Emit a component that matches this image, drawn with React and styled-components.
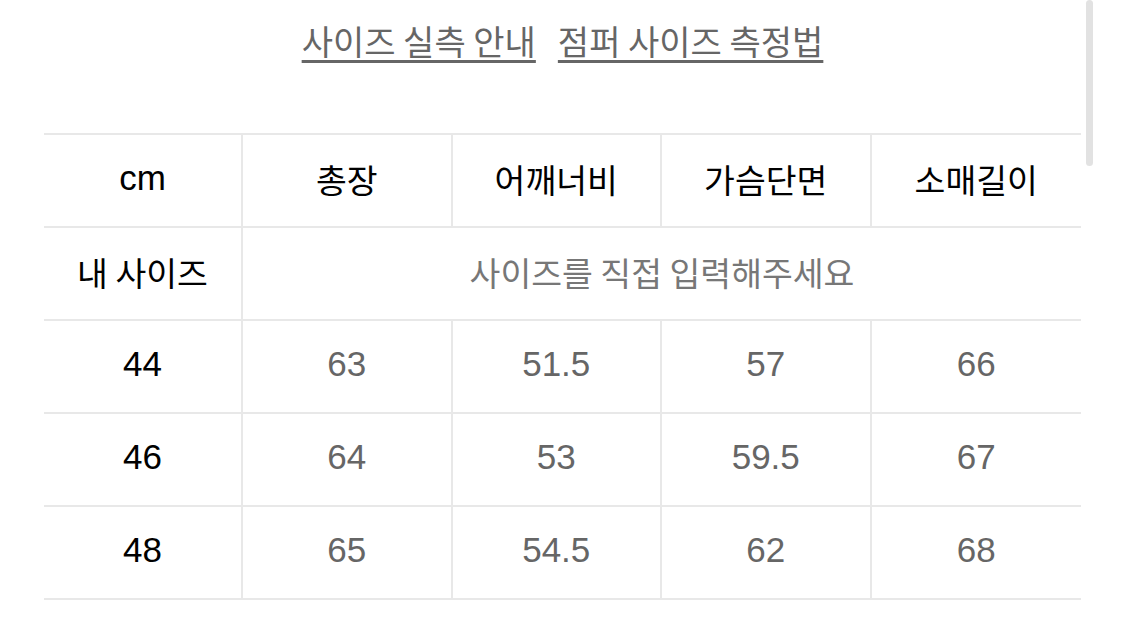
import styled, { createGlobalStyle } from "styled-components";

const GlobalStyle = createGlobalStyle`
  body {
    margin: 0;
    background: #ffffff;
    font-family: "Liberation Sans", "Noto Sans CJK KR", sans-serif;
  }
`;

const headers = ["총장", "어깨너비", "가슴단면", "소매길이"];

const sizes = [
  { size: "44", values: ["63", "51.5", "57", "66"] },
  { size: "46", values: ["64", "53", "59.5", "67"] },
  { size: "48", values: ["65", "54.5", "62", "68"] },
];

export default function App() {
  return (
    <Page>
      <GlobalStyle />
      <LinkBar>
        <GuideLink href="#">사이즈 실측 안내</GuideLink>
        <GuideLink href="#">점퍼 사이즈 측정법</GuideLink>
      </LinkBar>

      <SizeTable>
        <Cell $latin>cm</Cell>
        {headers.map((label, i) => (
          <Cell key={label} $last={i === headers.length - 1}>
            {label}
          </Cell>
        ))}

        <Cell>내 사이즈</Cell>
        <InputCell>사이즈를 직접 입력해주세요</InputCell>

        {sizes.map((row) => (
          <Row key={row.size}>
            <Cell $latin>{row.size}</Cell>
            {row.values.map((value, i) => (
              <Cell key={i} $latin $muted $last={i === row.values.length - 1}>
                {value}
              </Cell>
            ))}
          </Row>
        ))}
      </SizeTable>

      <Scrollbar />
    </Page>
  );
}

const Page = styled.div`
  position: relative;
  width: 1125px;
  height: 622px;
  padding: 0 44px;
  box-sizing: border-box;
  overflow: hidden;
`;

const LinkBar = styled.div`
  display: flex;
  justify-content: center;
  gap: 22px;
  width: 1037px;
  height: 133px;
  padding-top: 19px;
  box-sizing: border-box;
`;

const GuideLink = styled.a`
  font-family: "Noto Sans CJK KR", sans-serif;
  font-size: 34px;
  line-height: 44px;
  color: #666666;
  text-decoration: underline;
  text-decoration-thickness: 3px;
  text-underline-offset: 5px;
`;

const SizeTable = styled.div`
  display: grid;
  grid-template-columns: 199px repeat(4, 1fr);
  width: 1037px;
  border-top: 2px solid #e8e8e8;
`;

const Row = styled.div`
  display: contents;
`;

const Cell = styled.div`
  display: flex;
  align-items: center;
  justify-content: center;
  height: 91px;
  padding-bottom: 5px;
  box-sizing: border-box;
  height: 93px;
  border-bottom: 2px solid #e8e8e8;
  border-right: ${({ $last }) => ($last ? "none" : "2px solid #e8e8e8")};
  font-family: ${({ $latin }) =>
    $latin ? '"Liberation Sans", sans-serif' : '"Noto Sans CJK KR", sans-serif'};
  font-size: ${({ $latin }) => ($latin ? "35px" : "33.5px")};
  color: ${({ $muted }) => ($muted ? "#666666" : "#000000")};
`;

const InputCell = styled.div`
  grid-column: 2 / span 4;
  display: flex;
  align-items: center;
  justify-content: center;
  height: 93px;
  padding-bottom: 5px;
  box-sizing: border-box;
  border-bottom: 2px solid #e8e8e8;
  font-family: "Noto Sans CJK KR", sans-serif;
  font-size: 33.5px;
  color: #777777;
`;

const Scrollbar = styled.div`
  position: absolute;
  top: 0;
  right: 32px;
  width: 7px;
  height: 166px;
  border-radius: 4px;
  background: #e2e2e2;
`;
